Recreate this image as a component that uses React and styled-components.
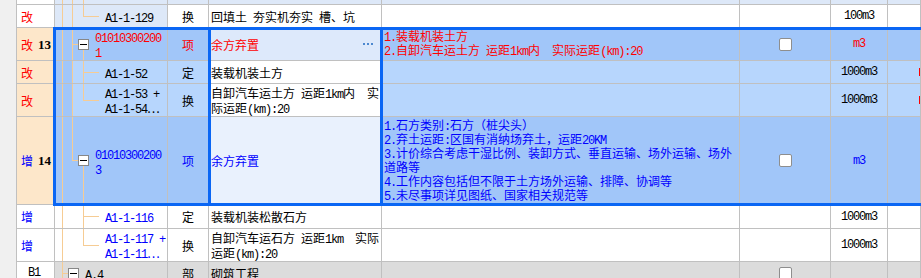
import React from "react";
import styled, { createGlobalStyle } from "styled-components";

const C = {
  grid: "#c0c0c0",
  sel: "#0a66f4",
  parent: "#a1c6f9",
  child: "#b7d6fd",
  nameParent: "#dde9fb",
  nameParent2: "#e9f1fd",
  status: "#fde7ca",
  pale: "#dde8f8",
  gray: "#dcdcdc",
  red: "#ff0000",
  blue: "#0000ff",
  tree: "#f6cc94",
  white: "#ffffff",
};

const GlobalStyle = createGlobalStyle`
  html, body { margin: 0; padding: 0; background: #fff; overflow: hidden; }
  body {
    font-family: "Noto Sans CJK SC", "Noto Sans", sans-serif;
    font-size: 12px;
    color: #000;
  }
`;

const Page = styled.div`
  display: flex;
  width: 921px;
  height: 278px;
  overflow: hidden;
`;

const Gutter = styled.div`
  flex: none;
  width: 17px;
  box-sizing: border-box;
  background: #f0f0f0;
  border-right: 1px solid ${C.grid};
`;

const Table = styled.div`
  flex: 1;
  min-width: 0;
  display: flex;
  flex-direction: column;
`;

const Block = styled.div`
  position: relative;
  display: flex;
  flex-direction: column;
`;

const SelectionFrame = styled.div`
  position: absolute;
  top: -1px;
  bottom: -1px;
  left: 36px;
  right: -10px;
  border: 3px solid ${C.sel};
  pointer-events: none;
  z-index: 2;
`;

const ColumnFrame = styled.div`
  position: absolute;
  top: -1px;
  bottom: -1px;
  left: 191px;
  width: 175px;
  box-sizing: border-box;
  border-left: 3px solid ${C.sel};
  border-right: 3px solid ${C.sel};
  pointer-events: none;
  z-index: 2;
`;

const Row = styled.div`
  flex: none;
  display: grid;
  grid-template-columns: 38px 113px 41px 173px 358px 91px 57px 1fr;
  height: ${(p) => p.$h}px;
  border-bottom: 1px solid ${C.grid};
`;

const Cell = styled.div`
  box-sizing: border-box;
  min-width: 0;
  overflow: hidden;
  white-space: nowrap;
  border-right: 1px solid ${C.grid};
  background: ${(p) => p.$bg || "#fff"};
  color: ${(p) => p.$color || "#000"};
  display: flex;
  align-items: center;
`;

const StatusCell = styled(Cell)`
  gap: 5px;
  padding-left: ${(p) => (p.$center ? 0 : 4)}px;
  padding-right: ${(p) => (p.$center ? 3 : 0)}px;
  justify-content: ${(p) => (p.$center ? "center" : "flex-start")};
`;

const Mark = styled.span`
  color: ${(p) => p.$color};
  line-height: 15px;
`;

const Num = styled.span`
  font-family: "Liberation Serif", serif;
  font-weight: bold;
  font-size: 13px;
  line-height: 15px;
`;

const CodeCell = styled(Cell)`
  align-items: stretch;
`;

const GuideSvg = styled.svg`
  flex: none;
  display: block;
`;

const TypeCell = styled(Cell)`
  justify-content: center;
`;

const NameCell = styled(Cell)`
  justify-content: space-between;
  padding: 0 8px 0 2px;
`;

const Lines = styled.div`
  align-self: ${(p) => (p.$top ? "flex-start" : "center")};
  display: flex;
  flex-direction: column;
`;

const Line = styled.div`
  height: ${(p) => p.$lh || 15}px;
  line-height: ${(p) => p.$lh || 15}px;
  white-space: pre;
`;

const More = styled.span`
  display: flex;
  gap: 2px;
`;

const Dot = styled.i`
  width: 2px;
  height: 2px;
  background: #4c88cf;
`;

const FeatureCell = styled(Cell)`
  align-items: flex-start;
  padding: 1px 2px 0;
`;

const CheckCell = styled(Cell)`
  justify-content: center;
`;

const Checkbox = styled.span`
  width: 13px;
  height: 13px;
  box-sizing: border-box;
  background: #fff;
  border: 1px solid #8e8e8e;
  border-radius: 2px;
`;

const UnitCell = styled(Cell)`
  justify-content: center;
`;

const TailCell = styled(Cell)`
  padding-left: 31px;
`;

const CutMark = styled.span`
  width: 3px;
  height: 8px;
  background: ${C.red};
`;

const Ascii = styled.span`
  font-family: "Liberation Mono", monospace;
  font-size: 12px;
  letter-spacing: -1.2px;
  line-height: 1;
  white-space: pre;
`;

const isAscii = (s) => /^[\x20-\x7e]+$/.test(s);
const mix = (s) =>
  s
    .split(/([\x20-\x7e]+)/)
    .filter(Boolean)
    .map((part, i) =>
      isAscii(part) ? (
        <Ascii key={i}>{part}</Ascii>
      ) : (
        <React.Fragment key={i}>{part}</React.Fragment>
      )
    );

function TextLines({ lines, lh, top }) {
  return (
    <Lines $top={top}>
      {lines.map((l, i) => (
        <Line key={i} $lh={lh}>
          {mix(l)}
        </Line>
      ))}
    </Lines>
  );
}

function Guides({ h, w, full = [], toMid = [], fromBox = [], hz, box, shade }) {
  const m = Math.floor(h / 2);
  return (
    <GuideSvg width={w} height={h}>
      {shade && <rect x="0" y="0" width="17" height={h} fill={shade} />}
      {full.map((x) => (
        <line key={"f" + x} x1={x + 0.5} x2={x + 0.5} y1="0" y2={h} stroke={C.tree} />
      ))}
      {toMid.map((x) => (
        <line key={"m" + x} x1={x + 0.5} x2={x + 0.5} y1="0" y2={m + 1} stroke={C.tree} />
      ))}
      {fromBox.map((x) => (
        <line key={"b" + x} x1={x + 0.5} x2={x + 0.5} y1={m + 6} y2={h} stroke={C.tree} />
      ))}
      {hz && <line x1={hz[0]} x2={hz[1]} y1={m + 0.5} y2={m + 0.5} stroke={C.tree} />}
      {box !== undefined && (
        <g>
          <rect x={box + 0.5} y={m - 4.5} width="10" height="10" fill="#fff" stroke="#878787" />
          <line x1={box + 2} x2={box + 9} y1={m + 0.5} y2={m + 0.5} stroke="#000" />
        </g>
      )}
    </GuideSvg>
  );
}

const W = C.white;

const before = [
  {
    id: "r0",
    h: 4,
    bg: { status: W, rest: C.pale },
    tree: { w: 50, full: [7, 17, 28] },
  },
  {
    id: "r1",
    h: 22,
    bg: { status: W, code: C.pale, rest: W },
    mark: "改",
    markColor: C.red,
    tree: { w: 50, full: [7, 17], toMid: [28], hz: [28, 44] },
    code: ["A1-1-129"],
    type: "换",
    name: ["回填土 夯实机夯实 槽、坑"],
    unit: "100m3",
  },
];

const selected = [
  {
    id: "r2",
    h: 32,
    bg: { status: C.status, name: C.nameParent, rest: C.parent },
    mark: "改",
    markColor: C.red,
    num: "13",
    tree: { w: 40, full: [7, 17], fromBox: [28], hz: [17, 23], box: 23 },
    code: ["01010300200", "1"],
    codeColor: C.red,
    type: "项",
    typeColor: C.red,
    name: ["余方弃置"],
    nameColor: C.red,
    more: true,
    feat: ["1.装载机装土方", "2.自卸汽车运土方 运距1km内  实际运距(km):20"],
    featColor: C.red,
    check: true,
    unit: "m3",
    unitColor: C.red,
  },
  {
    id: "r3",
    h: 22,
    bg: { status: C.status, name: W, rest: C.child },
    mark: "改",
    markColor: C.red,
    tree: { w: 50, full: [7, 17, 28], hz: [28, 44], shade: C.parent },
    code: ["A1-1-52"],
    type: "定",
    name: ["装载机装土方"],
    unit: "1000m3",
    cut: true,
  },
  {
    id: "r4",
    h: 32,
    bg: { status: C.status, name: W, rest: C.child },
    mark: "改",
    markColor: C.red,
    tree: { w: 50, full: [7, 17], toMid: [28], hz: [28, 44], shade: C.parent },
    code: ["A1-1-53 +", "A1-1-54…"],
    type: "换",
    name: ["自卸汽车运土方 运距1km内  实", "际运距(km):20"],
    unit: "1000m3",
    cut: true,
  },
  {
    id: "r5",
    h: 87,
    bg: { status: C.status, name: C.nameParent2, rest: C.parent },
    mark: "增",
    markColor: C.blue,
    num: "14",
    tree: { w: 40, full: [7], toMid: [17], fromBox: [28], hz: [17, 23], box: 23 },
    code: ["01010300200", "3"],
    codeColor: C.blue,
    type: "项",
    typeColor: C.blue,
    name: ["余方弃置"],
    nameColor: C.blue,
    feat: [
      "1.石方类别:石方（桩尖头）",
      "2.弃土运距:区国有消纳场弃土，运距20KM",
      "3.计价综合考虑干湿比例、装卸方式、垂直运输、场外运输、场外",
      "道路等",
      "4.工作内容包括但不限于土方场外运输、排障、协调等",
      "5.未尽事项详见图纸、国家相关规范等",
    ],
    featColor: C.blue,
    check: true,
    unit: "m3",
    unitColor: C.blue,
  },
];

const after = [
  {
    id: "r6",
    h: 23,
    bg: { rest: W },
    mark: "增",
    markColor: C.blue,
    tree: { w: 50, full: [7, 28], hz: [28, 44] },
    code: ["A1-1-116"],
    codeColor: C.blue,
    type: "定",
    name: ["装载机装松散石方"],
    unit: "1000m3",
  },
  {
    id: "r7",
    h: 32,
    bg: { rest: W },
    mark: "增",
    markColor: C.blue,
    tree: { w: 50, full: [7], toMid: [28], hz: [28, 44] },
    code: ["A1-1-117 +", "A1-1-11…"],
    codeColor: C.blue,
    type: "换",
    name: ["自卸汽车运石方 运距1km  实际", "运距(km):20"],
    unit: "1000m3",
  },
  {
    id: "r8",
    h: 22,
    bg: { status: W, rest: C.gray },
    statusText: "B1",
    tree: { w: 30, full: [7], fromBox: [18], hz: [7, 13], box: 13 },
    code: ["A.4"],
    type: "部",
    name: ["砌筑工程"],
    check: true,
  },
];

function GridRow({ r }) {
  const bg = (k) => (r.bg && (r.bg[k] || r.bg.rest)) || W;
  return (
    <Row $h={r.h}>
      <StatusCell $bg={bg("status")} $center={!!r.statusText}>
        {r.mark && <Mark $color={r.markColor}>{r.mark}</Mark>}
        {r.num && <Num>{r.num}</Num>}
        {r.statusText && <Ascii>{r.statusText}</Ascii>}
      </StatusCell>
      <CodeCell $bg={bg("code")} $color={r.codeColor}>
        <Guides h={r.h} {...r.tree} />
        {r.code && <TextLines lines={r.code} lh={15} />}
      </CodeCell>
      <TypeCell $bg={bg("type")} $color={r.typeColor}>
        {r.type}
      </TypeCell>
      <NameCell $bg={bg("name")} $color={r.nameColor}>
        {r.name && <TextLines lines={r.name} lh={15} />}
        {r.more && (
          <More>
            <Dot />
            <Dot />
            <Dot />
          </More>
        )}
      </NameCell>
      <FeatureCell $bg={bg("feat")} $color={r.featColor}>
        {r.feat && <TextLines lines={r.feat} lh={14} top />}
      </FeatureCell>
      <CheckCell $bg={bg("check")}>{r.check && <Checkbox />}</CheckCell>
      <UnitCell $bg={bg("unit")} $color={r.unitColor}>
        {r.unit && mix(r.unit)}
      </UnitCell>
      <TailCell $bg={bg("tail")}>{r.cut && <CutMark />}</TailCell>
    </Row>
  );
}

export default function App() {
  return (
    <>
      <GlobalStyle />
      <Page>
        <Gutter />
        <Table>
          {before.map((r) => (
            <GridRow key={r.id} r={r} />
          ))}
          <Block>
            {selected.map((r) => (
              <GridRow key={r.id} r={r} />
            ))}
            <SelectionFrame />
            <ColumnFrame />
          </Block>
          {after.map((r) => (
            <GridRow key={r.id} r={r} />
          ))}
        </Table>
      </Page>
    </>
  );
}
